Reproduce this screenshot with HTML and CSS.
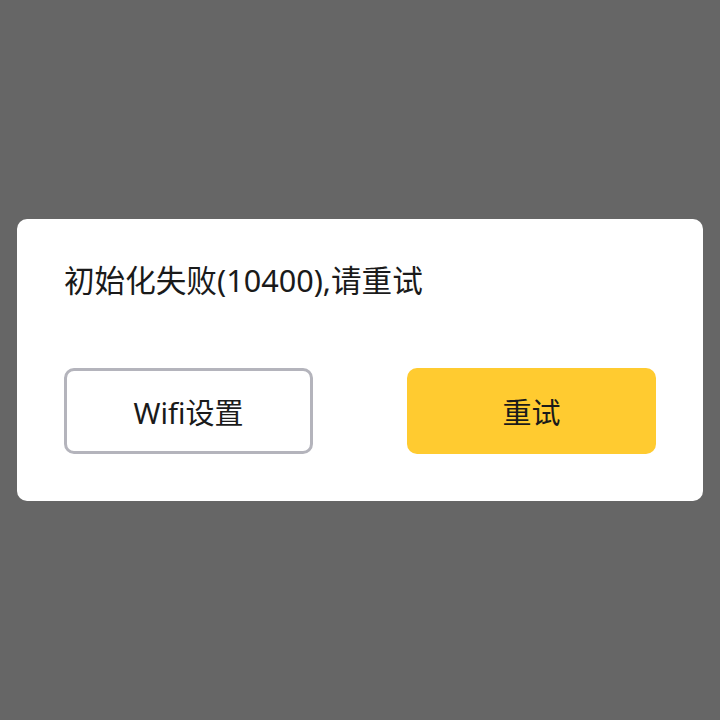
FILE: index.html
```html
<!DOCTYPE html>
<html lang="zh-CN">
<head>
  <meta charset="UTF-8" />
  <meta name="viewport" content="width=device-width, initial-scale=1.0"/>
  <title>初始化失败</title>
  <link rel="stylesheet" href="styles.css">
</head>
<body>

  <!-- Error dialog -->
  <div class="dialog">
    <p class="dialog-msg">初始化失败(10400),请重试</p>
    <div class="dialog-actions">
      <button class="btn btn-outline">Wifi设置</button>
      <button class="btn btn-primary">重试</button>
    </div>
  </div>

</body>
</html>
```

FILE: styles.css
```css
html, body {
  height: 100%;
}

body {
  margin: 0;
  background: #666666;
  font-family: "Noto Sans", "Noto Sans CJK SC", sans-serif;
  display: flex;
  align-items: center;
  justify-content: center;
}

.dialog {
  width: 686px;
  box-sizing: border-box;
  background: #fff;
  border-radius: 10px;
  padding: 41px 47px 47px;
}

.dialog-msg {
  margin: 0 0 68px;
  font-size: 30.6px;
  line-height: 40px;
  color: #1a1a1a;
}

.dialog-actions {
  display: flex;
  justify-content: space-between;
}

.btn {
  width: 249px;
  height: 86px;
  box-sizing: border-box;
  border-radius: 10px;
  font-family: inherit;
  font-size: 29px;
  color: #1a1a1a;
  cursor: pointer;
}

.btn-outline {
  background: #fff;
  border: 3px solid #b4b4bc;
}

.btn-primary {
  background: #ffcb30;
  border: none;
}
```
